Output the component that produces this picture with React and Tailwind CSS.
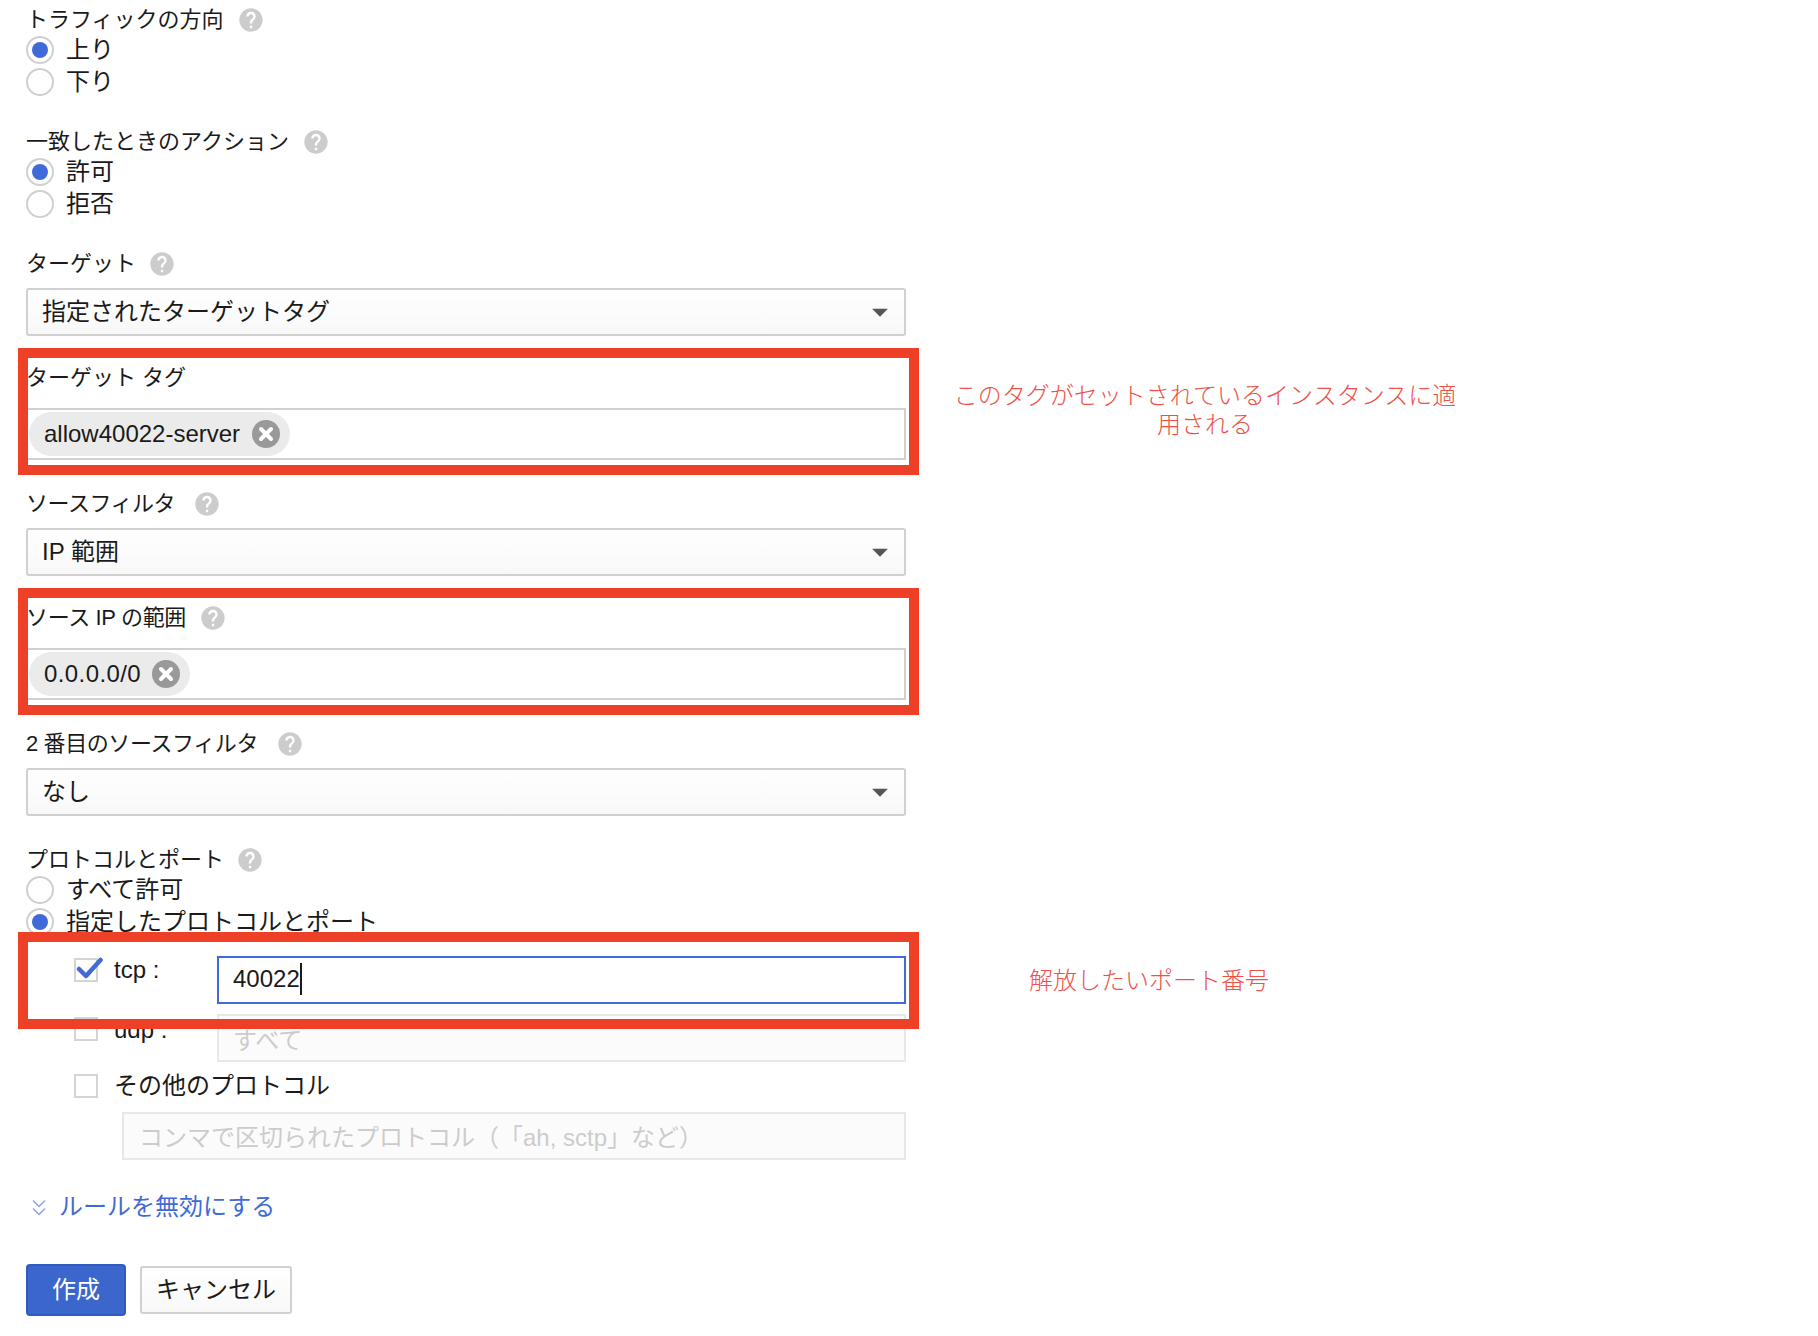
import React from "react";
import { MdHelp, MdArrowDropDown } from "react-icons/md";

function Label({ children, help = true, className = "", helpGap = "ml-[13px]" }) {
  return (
    <div className={`flex h-8 items-center text-[22px] leading-8 text-[#1a1a1a] ${className}`}>
      <span>{children}</span>
      {help && <MdHelp size={28} className={`${helpGap} text-[#cccccc]`} />}
    </div>
  );
}

function Radio({ checked, children }) {
  return (
    <div className="flex h-8 items-center">
      <span className="flex h-7 w-7 items-center justify-center rounded-full border-2 border-[#d0d0d0] bg-white">
        {checked && <span className="h-4 w-4 rounded-full bg-[#3f6ad8]" />}
      </span>
      <span className="ml-[12px] text-[24px] leading-8 text-[#1a1a1a]">{children}</span>
    </div>
  );
}

function Select({ children, className = "" }) {
  return (
    <div className={`flex h-12 items-center justify-between rounded-[3px] border-2 border-[#d0d0d0] bg-gradient-to-b from-white to-[#f8f8f8] pl-[14px] pr-[5px] text-[24px] text-[#1a1a1a] ${className}`}>
      <span>{children}</span>
      <MdArrowDropDown size={38} className="text-[#555555]" />
    </div>
  );
}

function ChipClose() {
  return (
    <svg viewBox="0 0 28 28" className="ml-auto h-7 w-7">
      <circle cx="14" cy="14" r="14" fill="#999999" />
      <path d="M9 9 L19 19 M19 9 L9 19" stroke="#ffffff" strokeWidth="4" strokeLinecap="round" />
    </svg>
  );
}

function ChipField({ children, chipWidth }) {
  return (
    <div className="mt-[14px] flex h-[52px] items-center border-2 border-[#d0d0d0] bg-white pl-[1px]">
      <div className={`flex h-11 items-center rounded-[22px] bg-[#ebebeb] pl-[15px] pr-[10px] text-[24px] text-[#1a1a1a] ${chipWidth}`}>
        <span>{children}</span>
        <ChipClose />
      </div>
    </div>
  );
}

function Check({ checked }) {
  return (
    <span className="relative block h-6 w-6 border-2 border-[#d4d4d4] bg-white">
      {checked && (
        <svg viewBox="0 0 28 24" className="absolute left-0 -top-[3px] h-6 w-7">
          <path d="M3 12 L10 19 L24.5 3" fill="none" stroke="#3f6ad8" strokeWidth="4.5" strokeLinecap="round" strokeLinejoin="round" />
        </svg>
      )}
    </span>
  );
}

export default function App() {
  return (
    <div className="relative h-[1336px] w-[1818px] overflow-hidden bg-white [font-family:'Liberation_Sans','Noto_Sans_CJK_JP',sans-serif]">
      <div className="ml-[26px] w-[880px] pt-[4px]">
        <Label>トラフィックの方向</Label>
        <div className="-mt-[2px]">
          <Radio checked>上り</Radio>
          <Radio>下り</Radio>
        </div>

        <Label className="mt-[28px]">一致したときのアクション</Label>
        <div className="-mt-[2px]">
          <Radio checked>許可</Radio>
          <Radio>拒否</Radio>
        </div>

        <Label className="mt-[28px]" helpGap="ml-[12px]">ターゲット</Label>
        <Select className="mt-2">指定されたターゲットタグ</Select>

        <Label help={false} className="mt-[26px]">ターゲット タグ</Label>
        <ChipField chipWidth="w-[261px]">allow40022-server</ChipField>

        <Label className="mt-[28px] tracking-[-0.5px]" helpGap="ml-[18px]">ソースフィルタ</Label>
        <Select className="mt-2">IP 範囲</Select>

        <Label className="mt-[26px] tracking-[-0.35px]">ソース IP の範囲</Label>
        <ChipField chipWidth="w-[161px] tracking-[0.4px]">0.0.0.0/0</ChipField>

        <Label className="mt-[28px] tracking-[-0.4px]" helpGap="ml-[18px]">2 番目のソースフィルタ</Label>
        <Select className="mt-2">なし</Select>

        <Label className="mt-[28px]" helpGap="ml-[12px]">プロトコルとポート</Label>
        <div className="-mt-[2px]">
          <Radio>すべて許可</Radio>
          <Radio checked>指定したプロトコルとポート</Radio>
        </div>

        <div className="mt-[18px] flex h-12 pl-[48px]">
          <div className="mt-[2px]"><Check checked /></div>
          <span className="ml-[16px] w-[103px] text-[24px] leading-[28px] text-[#1a1a1a]">tcp :</span>
          <div className="flex h-12 flex-1 items-center border-2 border-[#3f6ad8] pb-[2px] pl-[14px] text-[24px] text-[#1a1a1a]">
            <span className="border-r-2 border-[#1a1a1a] leading-[32px]">40022</span>
          </div>
        </div>

        <div className="mt-[10px] flex h-12 pl-[48px]">
          <div className="mt-[3px]"><Check /></div>
          <span className="ml-[16px] mt-[2px] w-[103px] text-[24px] leading-[28px] text-[#1a1a1a]">udp :</span>
          <div className="flex h-12 flex-1 items-center border-2 border-[#e8e8e8] bg-[#fbfbfb] pl-[14px] pt-[5px] text-[24px] text-[#cccccc]">すべて</div>
        </div>

        <div className="mt-3 flex h-6 items-center pl-[48px]">
          <Check />
          <span className="ml-[16px] text-[24px] text-[#1a1a1a]">その他のプロトコル</span>
        </div>

        <div className="ml-[96px] mt-[14px] flex h-12 items-center border-2 border-[#e8e8e8] bg-[#fbfbfb] pl-[15px] pt-[4px] text-[24px] text-[#cccccc] [text-spacing-trim:space-all]">
          コンマで区切られたプロトコル（「ah, sctp」など）
        </div>

        <div className="mt-[31px] flex h-8 items-center pl-[6px] text-[24px] text-[#3f6ad8]">
          <svg viewBox="0 0 14 17" className="h-[17px] w-[14px]">
            <path d="M1 1.5 L7 7.5 L13 1.5 M1 9.5 L7 15.5 L13 9.5" fill="none" stroke="#8aa6e8" strokeWidth="1.5" />
          </svg>
          <span className="ml-[13px]">ルールを無効にする</span>
        </div>

        <div className="mt-[41px] flex items-center">
          <button className="h-[52px] w-[100px] rounded-[4px] border-2 border-[#2f5bc0] bg-[#3b66cc] text-[24px] text-white">作成</button>
          <button className="ml-[14px] h-12 w-[152px] rounded-[3px] border-2 border-[#d0d0d0] bg-gradient-to-b from-white to-[#f8f8f8] text-[24px] text-[#1a1a1a]">キャンセル</button>
        </div>
      </div>

      <div className="pointer-events-none absolute left-[18px] top-[348px] h-[127px] w-[901px] border-[10px] border-[#ee4027]" />
      <div className="pointer-events-none absolute left-[18px] top-[588px] h-[127px] w-[901px] border-[10px] border-[#ee4027]" />
      <div className="pointer-events-none absolute left-[18px] top-[932px] h-[97px] w-[901px] border-[10px] border-[#ee4027]" />

      <div className="absolute left-[950px] top-[381px] w-[510px] text-center text-[24px] font-light leading-[29px] text-[#ef5048]">
        このタグがセットされているインスタンスに適<br />用される
      </div>
      <div className="absolute left-[1029px] top-[966px] text-[24px] font-light leading-[30px] text-[#ef5048]">解放したいポート番号</div>
    </div>
  );
}
